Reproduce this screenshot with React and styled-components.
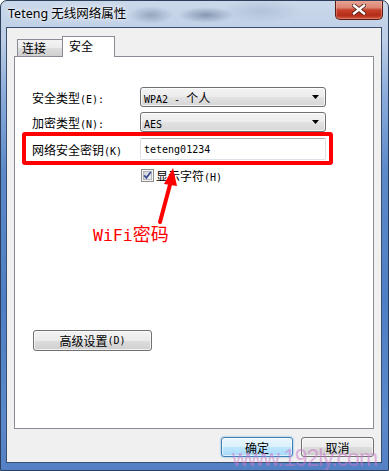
import React from "react";
import styled, { createGlobalStyle } from "styled-components";

const Global = createGlobalStyle`
  html, body { margin: 0; padding: 0; background: #ffffff; }
  body { width: 389px; height: 471px; overflow: hidden; }
  * { box-sizing: border-box; }
`;

const CJK = `"Noto Sans CJK SC", "Noto Sans", sans-serif`;

const Frame = styled.div`
  position: relative;
  width: 389px;
  height: 471px;
  display: flex;
  flex-direction: column;
  border: 1px solid #2b3e5a;
  border-radius: 7px 7px 0 0;
  overflow: hidden;
  background: linear-gradient(
    to bottom,
    #cad8ea 0px,
    #bccde5 40px,
    #8eaedb 90px,
    #5c89c9 170px,
    #4e7ec4 300px,
    #5a88cb 420px,
    #5380c4 471px
  );
`;

const TitleBar = styled.div`
  height: 26px;
  flex: none;
  display: flex;
  align-items: flex-start;
  padding-left: 7px;
  background:
    radial-gradient(ellipse 22px 9px at 150px 14px, rgba(60, 80, 110, 0.35), transparent),
    radial-gradient(ellipse 28px 8px at 205px 14px, rgba(40, 60, 95, 0.4), transparent),
    radial-gradient(ellipse 40px 12px at 260px 10px, rgba(120, 140, 170, 0.25), transparent);
`;

const Title = styled.div`
  flex: 1;
  height: 26px;
  line-height: 26px;
  font-family: "Noto Sans", "Noto Sans CJK SC", sans-serif;
  font-size: 12.5px;
  color: #000;
  text-shadow: 0 0 6px rgba(255, 255, 255, 0.9), 0 0 3px rgba(255, 255, 255, 0.9);
`;

const CloseButton = styled.div`
  width: 48px;
  height: 20px;
  margin-right: 5px;
  margin-top: -1px;
  display: flex;
  align-items: center;
  justify-content: center;
  border: 1px solid #5a1c12;
  border-top: none;
  border-radius: 0 0 5px 5px;
  background: linear-gradient(
    to bottom,
    #e9a697 0%,
    #dc8574 40%,
    #c5422b 52%,
    #b52c17 80%,
    #cf573d 100%
  );
  box-shadow: inset 0 0 0 1px rgba(255, 200, 190, 0.35);
`;

const Client = styled.div`
  flex: 1;
  margin: 0 6px 7px 5px;
  border: 1px solid #3a4f6e;
  background: #f0f0f0;
  padding: 8px 7px 0 7px;
  display: flex;
  flex-direction: column;
`;

const TabStrip = styled.div`
  height: 20px;
  display: flex;
  align-items: flex-end;
  padding-left: 3px;
`;

const Tab = styled.div`
  position: relative;
  z-index: ${(p) => (p.$active ? 2 : 1)};
  height: ${(p) => (p.$active ? "21px" : "17px")};
  width: ${(p) => (p.$active ? "53px" : "46px")};
  margin-left: ${(p) => (p.$active ? "-1px" : "0")};
  margin-bottom: ${(p) => (p.$active ? "-1px" : "0")};
  padding-left: ${(p) => (p.$active ? "6px" : "4px")};
  border: 1px solid #898c95;
  border-bottom: none;
  background: ${(p) =>
    p.$active
      ? "#ffffff"
      : "linear-gradient(to bottom, #f3f3f3 0%, #ebebeb 50%, #dddddd 51%, #cfcfcf 100%)"};
  font-family: ${CJK};
  font-size: 12px;
  line-height: ${(p) => (p.$active ? "17px" : "16px")};
  color: #000;
`;

const Panel = styled.div`
  position: relative;
  flex: 1;
  border: 1px solid #898c95;
  background: #ffffff;
  padding: 30px 0 0 17px;
  display: flex;
  flex-direction: column;
  align-items: flex-start;
`;

const A = styled.span`
  font-family: "DejaVu Sans Mono", "Liberation Mono", monospace;
  font-size: ${(p) => p.$size || "10px"};
`;

const FieldRow = styled.div`
  position: relative;
  display: grid;
  grid-template-columns: 108px 186px;
  align-items: center;
  height: ${(p) => p.$h || 20}px;
  margin-top: ${(p) => p.$mt || 0}px;
`;

const Highlight = styled.div`
  position: absolute;
  left: -10px;
  right: -7px;
  top: -6px;
  bottom: -5px;
  border: 4px solid #ff0000;
  border-radius: 3px;
  pointer-events: none;
`;

const Label = styled.div`
  font-family: ${CJK};
  font-size: 12px;
  color: #000;
  white-space: nowrap;
`;

const Combo = styled.div`
  height: 20px;
  display: flex;
  align-items: center;
  padding: 0 6px 0 3px;
  border: 1px solid #707070;
  border-radius: 3px;
  background: linear-gradient(to bottom, #f4f4f4 0%, #ececec 50%, #e2e2e2 51%, #d6d6d6 100%);
  box-shadow: inset 0 0 0 1px rgba(255, 255, 255, 0.7);
  font-family: ${CJK};
  font-size: 12px;
  color: #000;
`;

const ComboText = styled.span`
  flex: 1;
  white-space: nowrap;
`;

const TextBox = styled.div`
  height: 22px;
  display: flex;
  align-items: center;
  padding-left: 3px;
  border: 1px solid #dde1e7;
  border-top-color: #abadb3;
  border-radius: 2px;
  background: #fff;
  color: #000;
`;

const CheckRow = styled.div`
  display: flex;
  align-items: center;
  gap: 2px;
  margin: 9px 0 0 109px;
  height: 13px;
  font-family: ${CJK};
  font-size: 12px;
  color: #000;
`;

const Note = styled.div`
  margin: 41px 0 0 61px;
  height: 20px;
  line-height: 20px;
  font-family: ${CJK};
  font-size: 18px;
  color: #ff0000;
  white-space: nowrap;
`;

const ArrowLayer = styled.svg`
  position: absolute;
  left: 140px;
  top: 108px;
  overflow: visible;
  pointer-events: none;
`;

const Button = styled.div`
  width: ${(p) => p.$w}px;
  height: ${(p) => p.$h || 20}px;
  margin: ${(p) => p.$m || 0};
  display: flex;
  align-items: center;
  justify-content: center;
  border: 1px solid ${(p) => (p.$focused ? "#3c7fb1" : "#707070")};
  border-radius: 3px;
  background: ${(p) =>
    p.$focused
      ? "linear-gradient(to bottom, #eaf6fd 0%, #d9f0fc 50%, #bee6fd 51%, #a7d9f5 100%)"
      : "linear-gradient(to bottom, #f2f2f2 0%, #ebebeb 50%, #dddddd 51%, #cfcfcf 100%)"};
  box-shadow: ${(p) =>
    p.$focused
      ? "inset 0 0 0 1px rgba(255,255,255,0.6), 0 0 2px rgba(60,150,220,0.8)"
      : "inset 0 0 0 1px rgba(255,255,255,0.7)"};
  font-family: ${CJK};
  font-size: 12px;
  color: #000;
  white-space: nowrap;
`;

const ButtonRow = styled.div`
  flex: none;
  display: flex;
  justify-content: flex-end;
  gap: 8px;
  padding: 8px 0 5px;
`;

const Watermark = styled.div`
  position: absolute;
  left: 231px;
  top: 446px;
  font-family: "Liberation Sans", Arial, sans-serif;
  font-size: 23px;
  line-height: 23px;
  letter-spacing: -1px;
  color: rgba(206, 120, 206, 0.55);
  white-space: nowrap;
  pointer-events: none;
`;

const DownArrow = () => (
  <svg width="7" height="4" viewBox="0 0 7 4">
    <path d="M0 0 H7 L3.5 4 Z" fill="#000" />
  </svg>
);

const CloseGlyph = () => (
  <svg width="14" height="11" viewBox="0 0 14 11">
    <path d="M2 1.5 L12 9.5 M12 1.5 L2 9.5" stroke="#4a1a12" strokeWidth="4" strokeLinecap="square" />
    <path d="M2 1.5 L12 9.5 M12 1.5 L2 9.5" stroke="#ffffff" strokeWidth="2.4" strokeLinecap="square" />
  </svg>
);

const CheckBox = () => (
  <svg width="13" height="13" viewBox="0 0 13 13">
    <defs>
      <linearGradient id="cbg" x1="0" y1="0" x2="1" y2="1">
        <stop offset="0" stopColor="#cbcfd5" />
        <stop offset="1" stopColor="#f7f7f7" />
      </linearGradient>
    </defs>
    <rect x="0.5" y="0.5" width="12" height="12" fill="#f4f4f4" stroke="#8e8f8f" />
    <rect x="2.5" y="2.5" width="8" height="8" fill="url(#cbg)" stroke="#b2b6bc" />
    <path d="M3.2 6.4 L5.4 8.8 L9.8 3" stroke="#3b4f93" strokeWidth="1.8" fill="none" />
  </svg>
);

export default function App() {
  return (
    <>
      <Global />
      <Frame>
        <TitleBar>
          <Title>Teteng 无线网络属性</Title>
          <CloseButton>
            <CloseGlyph />
          </CloseButton>
        </TitleBar>
        <Client>
          <TabStrip>
            <Tab>连接</Tab>
            <Tab $active>安全</Tab>
          </TabStrip>
          <Panel>
            <FieldRow>
              <Label>
                安全类型<A>(E):</A>
              </Label>
              <Combo>
                <ComboText>
                  <A>WPA2 - </A>个人
                </ComboText>
                <DownArrow />
              </Combo>
            </FieldRow>
            <FieldRow $mt={5}>
              <Label>
                加密类型<A>(N):</A>
              </Label>
              <Combo>
                <ComboText>
                  <A>AES</A>
                </ComboText>
                <DownArrow />
              </Combo>
            </FieldRow>
            <FieldRow $mt={6} $h={22}>
              <Label>
                网络安全密钥<A>(K)</A>
              </Label>
              <TextBox>
                <A>teteng01234</A>
              </TextBox>
              <Highlight />
            </FieldRow>
            <CheckRow>
              <CheckBox />
              <span>
                显示字符<A>(H)</A>
              </span>
            </CheckRow>
            <Note>
              <A $size="16.5px">WiFi</A>密码
            </Note>
            <Button $w={119} $h={21} $m="87px 0 0 1px">
              高级设置<A>(D)</A>
            </Button>
            <ArrowLayer width="30" height="60" viewBox="0 0 30 60">
              <path d="M16 16 L5 57" stroke="#ff0000" strokeWidth="4" strokeLinecap="round" />
              <path d="M18 3 L9 19 L22 21 Z" fill="#ff0000" />
            </ArrowLayer>
          </Panel>
          <ButtonRow>
            <Button $w={72} $focused>
              确定
            </Button>
            <Button $w={73}>取消</Button>
          </ButtonRow>
        </Client>
        <Watermark>www.192ly.com</Watermark>
      </Frame>
    </>
  );
}
